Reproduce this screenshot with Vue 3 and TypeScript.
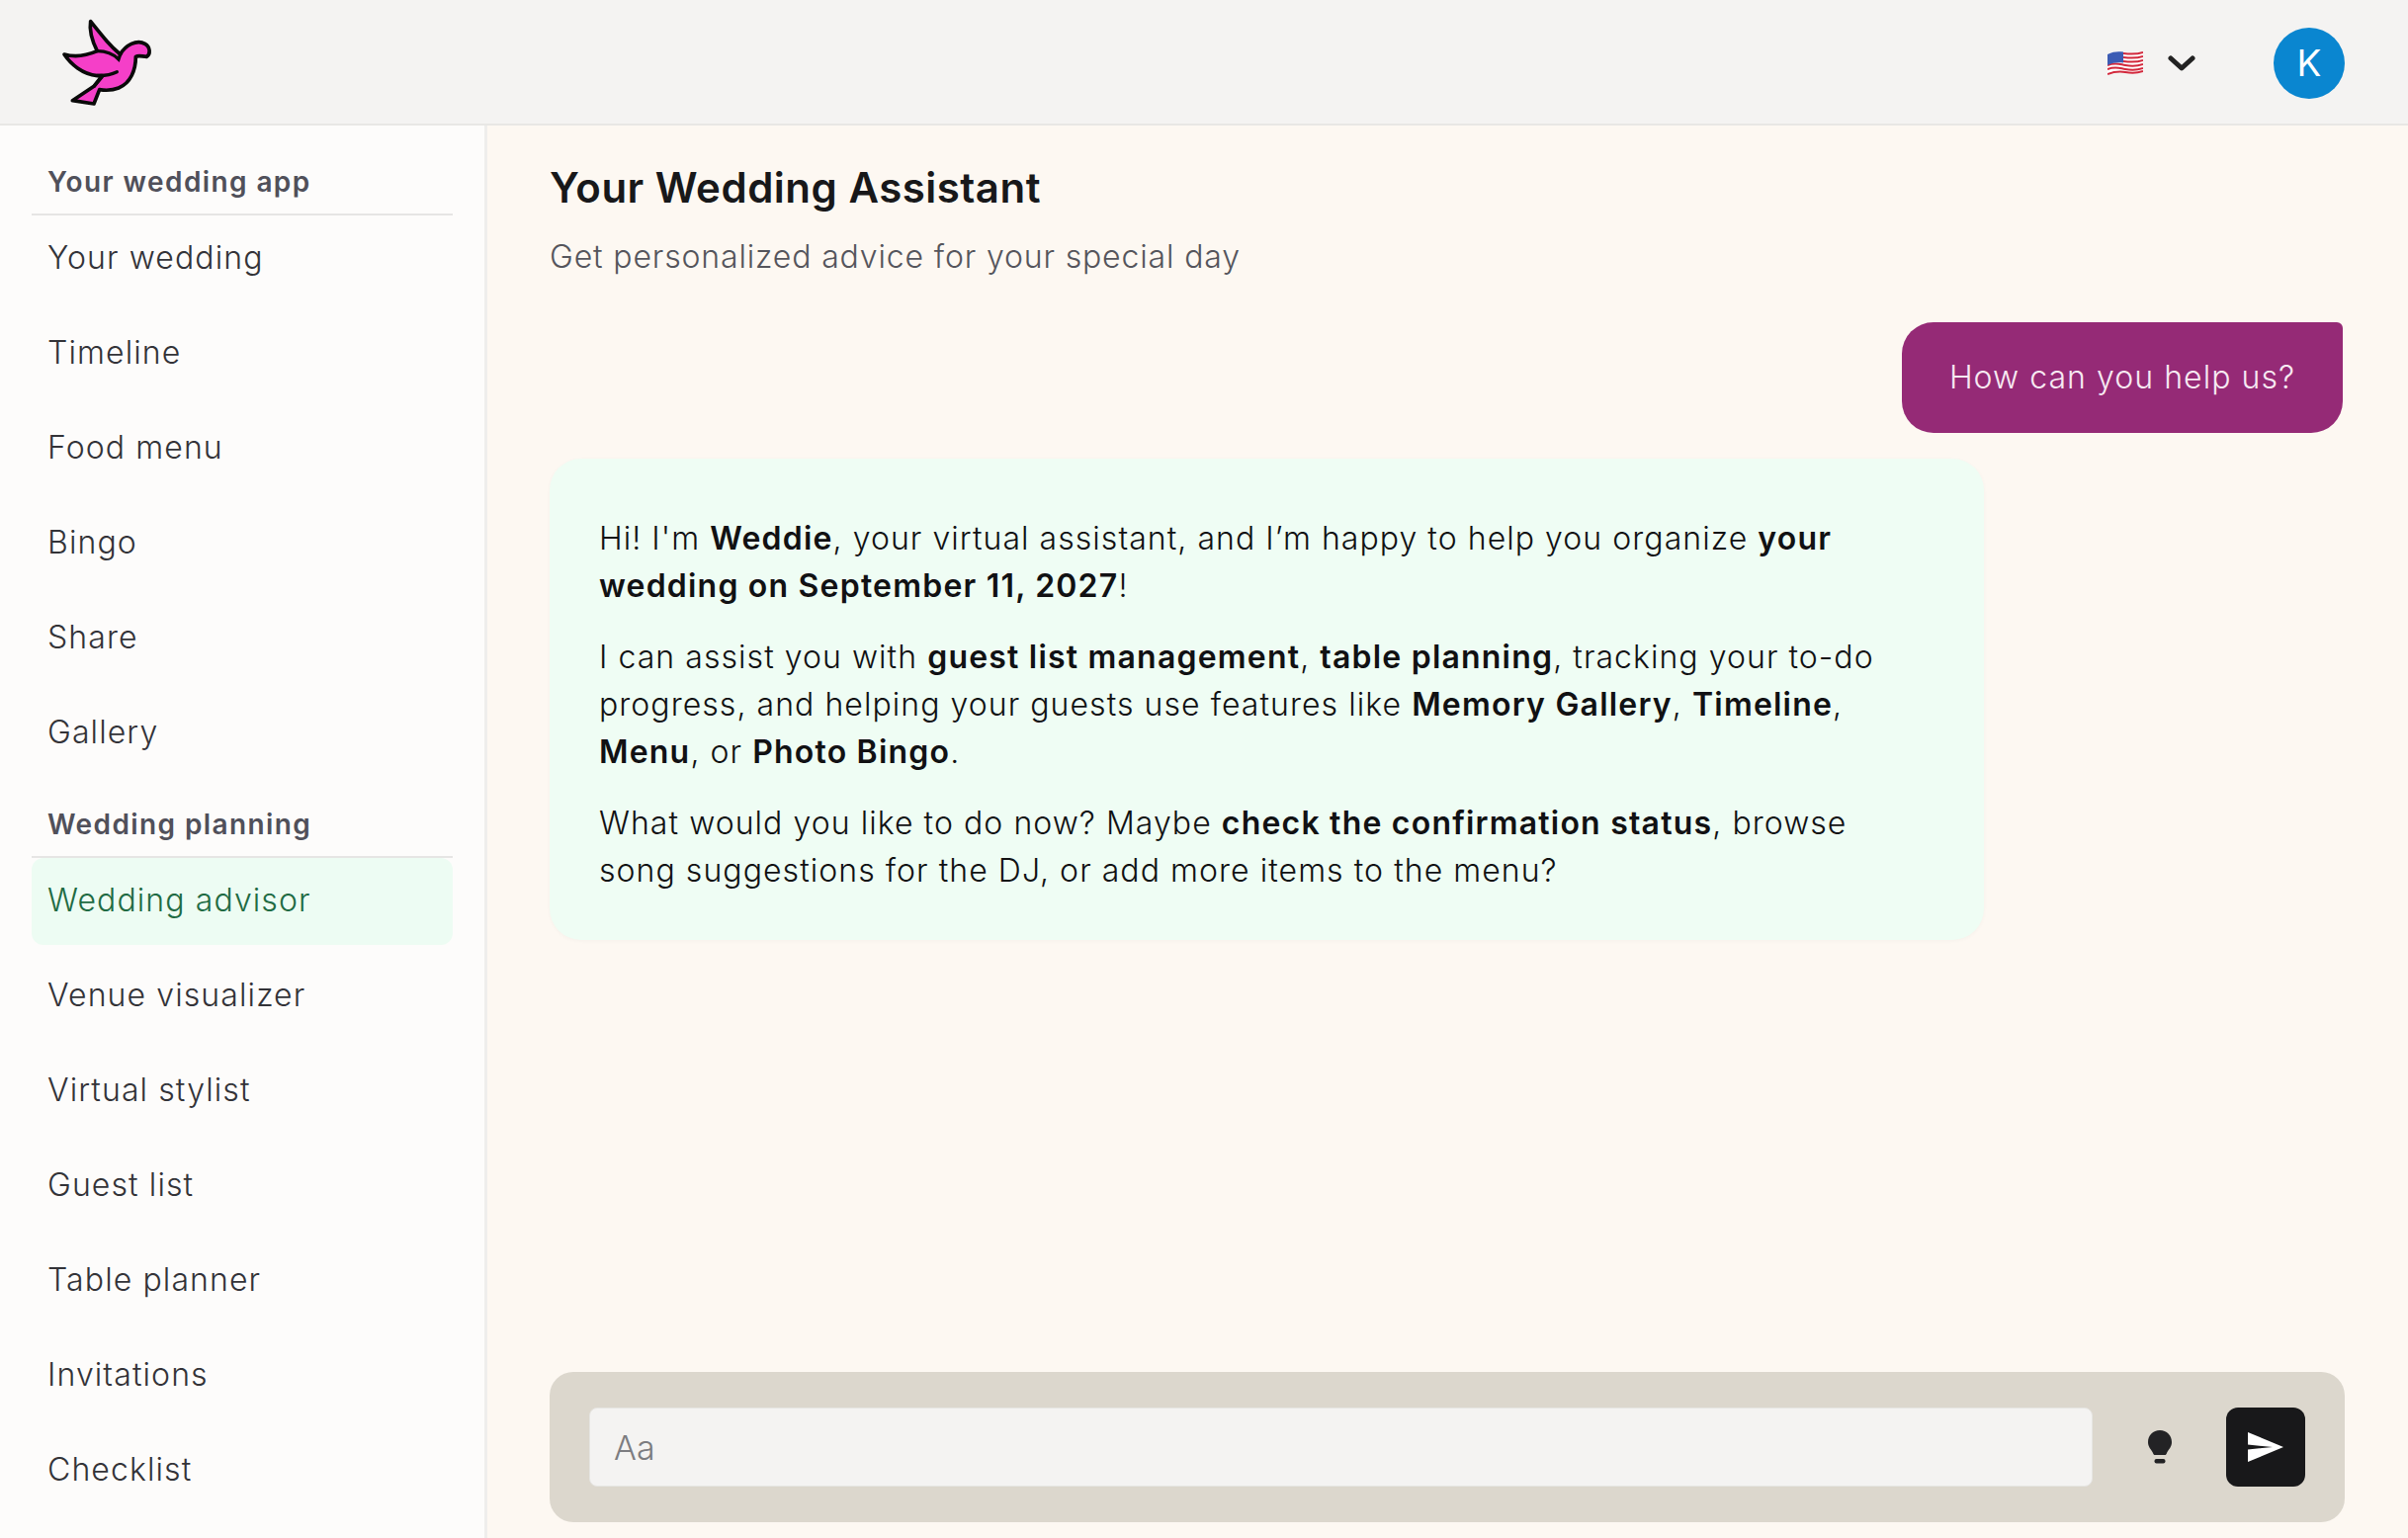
<script setup lang="ts">
interface NavGroup {
  title: string
  items: string[]
}

const groups: NavGroup[] = [
  {
    title: 'Your wedding app',
    items: ['Your wedding', 'Timeline', 'Food menu', 'Bingo', 'Share', 'Gallery'],
  },
  {
    title: 'Wedding planning',
    items: [
      'Wedding advisor',
      'Venue visualizer',
      'Virtual stylist',
      'Guest list',
      'Table planner',
      'Invitations',
      'Checklist',
    ],
  },
]

const activeItem = 'Wedding advisor'
</script>

<template>
  <div class="app">
    <header class="topbar">
      <svg class="logo" viewBox="0 0 390 330" aria-label="Logo">
        <path
          class="logo__fill"
          d="M155 35 C195 85 215 110 245 135 C260 108 295 88 320 103 C337 113 337 135 325 142 C312 142 302 137 292 142 C292 182 277 222 240 237 C220 245 195 244 182 242 L165 285 L100 275 L165 232 L190 200 L175 200 C130 195 95 165 75 135 C110 145 140 140 175 125 C160 95 150 65 155 35 Z"
        />
        <path class="logo__line" d="M175 125 C200 125 225 135 240 150 L245 135" />
        <path class="logo__line" d="M175 199 C195 200 220 195 235 188" />
        <path class="logo__line" d="M165 232 L190 203" />
      </svg>

      <div class="topbar__actions">
        <button type="button" class="lang-btn" aria-label="Language">
          <svg class="flag" viewBox="0 0 36 26">
            <path fill="#fff" d="M0 4 C8 0 12 1 18 2 C24 3 30 3 36 1 V22 C30 24 24 24 18 23 C12 22 8 22 0 25 Z" />
            <path
              fill="none"
              stroke="#d2283c"
              stroke-width="2"
              d="M16 3 C24 4 30 4 36 2 M16 7 C24 8 30 8 36 6 M16 11 C24 12 30 12 36 10 M0 15 C8 12 12 14 18 15 C24 16 30 16 36 14 M0 19 C8 16 12 18 18 19 C24 20 30 20 36 18 M0 24 C8 21 12 21 18 22 C24 23 30 23 36 21"
            />
            <path fill="#3c5cb4" d="M0 4 C6 1 11 1 16 1.6 V12.6 C11 12 6 12 0 15 Z" />
          </svg>
          <svg class="chevron" viewBox="0 0 28 18">
            <path d="M3 4 L14 14 L25 4" />
          </svg>
        </button>
        <div class="avatar">K</div>
      </div>
    </header>

    <div class="layout">
      <aside class="sidebar">
        <section v-for="group in groups" :key="group.title" class="nav-group">
          <h3 class="nav-group__title">{{ group.title }}</h3>
          <a
            v-for="item in group.items"
            :key="item"
            href="#"
            class="nav-item"
            :class="{ 'nav-item--active': item === activeItem }"
          >
            {{ item }}
          </a>
        </section>
      </aside>

      <main class="chat">
        <h1 class="chat__title">Your Wedding Assistant</h1>
        <p class="chat__subtitle">Get personalized advice for your special day</p>

        <div class="chat__messages">
          <div class="bubble bubble--user">How can you help us?</div>
          <div class="bubble bubble--bot">
            <p>
              Hi! I'm <strong>Weddie</strong>, your virtual assistant, and I’m happy to help you organize
              <strong>your wedding on September 11, 2027</strong>!
            </p>
            <p>
              I can assist you with <strong>guest list management</strong>, <strong>table planning</strong>,
              tracking your to-do progress, and helping your guests use features like
              <strong>Memory Gallery</strong>, <strong>Timeline</strong>, <strong>Menu</strong>, or
              <strong>Photo Bingo</strong>.
            </p>
            <p>
              What would you like to do now? Maybe <strong>check the confirmation status</strong>, browse
              song suggestions for the DJ, or add more items to the menu?
            </p>
          </div>
        </div>

        <form class="composer" @submit.prevent>
          <input class="composer__input" type="text" placeholder="Aa" />
          <button type="button" class="composer__hint" aria-label="Suggestions">
            <svg viewBox="0 0 24 34">
              <path
                d="M12 0 C5 0 0 5 0 12 C0 17 3 19 5 23 C5.500 24.500 6 25 7 25 H17 C18 25 18.500 24.500 19 23 C21 19 24 17 24 12 C24 5 19 0 12 0 Z"
              />
              <rect x="6.500" y="29" width="11" height="4.500" rx="2" />
            </svg>
          </button>
          <button type="submit" class="composer__send" aria-label="Send">
            <svg viewBox="0 0 36 30">
              <path d="M0 0 L36 15 L0 30 L0 17.500 L25 15 L0 12.500 Z" />
            </svg>
          </button>
        </form>
      </main>
    </div>
  </div>
</template>

<style>
html,
body {
  margin: 0;
  background: #fdf8f2;
}
</style>

<style scoped>
.app {
  height: 1556px;
  display: flex;
  flex-direction: column;
  overflow: hidden;
  font-family: Inter, 'Open Sans', sans-serif;
  color: #333338;
}

.topbar {
  flex: 0 0 127px;
  box-sizing: border-box;
  display: flex;
  align-items: center;
  justify-content: space-between;
  padding-left: 40px;
  padding-right: 64px;
  background: #f4f3f2;
  border-bottom: 2px solid #e8e7e5;
}

.logo {
  width: 130px;
  height: 110px;
  margin-top: 4px;
}

.logo__fill {
  fill: #f53fc8;
  stroke: #0a0a0a;
  stroke-width: 11;
  stroke-linejoin: round;
}

.logo__line {
  fill: none;
  stroke: #0a0a0a;
  stroke-width: 10;
  stroke-linecap: round;
}

.topbar__actions {
  display: flex;
  align-items: center;
  gap: 79px;
  margin-top: 2px;
}

.lang-btn {
  display: flex;
  align-items: center;
  gap: 25px;
  margin-left: -2px;
  padding: 0;
  border: 0;
  background: none;
}

.flag {
  width: 36px;
  height: 26px;
}

.chevron {
  width: 28px;
  height: 18px;
  fill: none;
  stroke: #222;
  stroke-width: 5;
  stroke-linecap: round;
  stroke-linejoin: round;
}

.avatar {
  width: 72px;
  height: 72px;
  display: flex;
  align-items: center;
  justify-content: center;
  border-radius: 50%;
  background: #0a86d0;
  color: #fff;
  font-size: 37px;
}

.layout {
  flex: 1;
  min-height: 0;
  display: flex;
}

.sidebar {
  flex: 0 0 493px;
  box-sizing: border-box;
  padding: 25px 32px 0;
  background: #fdfcfb;
  border-right: 3px solid #efeeec;
}

.nav-group + .nav-group {
  margin-top: 16px;
}

.nav-group__title {
  margin: 0;
  height: 66px;
  display: flex;
  align-items: center;
  padding: 0 16px;
  border-bottom: 2px solid #e6e5e4;
  box-sizing: border-box;
  font-size: 28px;
  font-weight: 600;
  letter-spacing: 1.4px;
  color: #50505a;
}

.nav-item {
  height: 88px;
  box-sizing: border-box;
  margin-bottom: 8px;
  display: flex;
  align-items: center;
  padding: 0 16px 4px;
  border-radius: 12px;
  font-size: 32px;
  font-weight: 300;
  letter-spacing: 1.1px;
  color: #333338;
  text-decoration: none;
}

.nav-item--active {
  background: #edfcf3;
  color: #1f6b43;
}

.chat {
  flex: 1;
  min-width: 0;
  box-sizing: border-box;
  display: flex;
  flex-direction: column;
  padding: 36px 64px 16px 63px;
}

.chat__title {
  margin: 0;
  font-size: 42px;
  line-height: 54px;
  font-weight: 600;
  letter-spacing: 0.5px;
  color: #18181a;
}

.chat__subtitle {
  margin: 16px 0 0;
  font-size: 32px;
  font-weight: 300;
  line-height: 54px;
  letter-spacing: 0.85px;
  color: #55555c;
}

.chat__messages {
  flex: 1;
  min-height: 0;
  display: flex;
  flex-direction: column;
  padding-top: 39px;
  gap: 26px;
}

.bubble {
  box-sizing: border-box;
  font-size: 32px;
  line-height: 48px;
}

.bubble--user {
  align-self: flex-end;
  width: 446px;
  height: 112px;
  margin-right: 2px;
  display: flex;
  align-items: center;
  justify-content: center;
  border-radius: 32px 6px 32px 32px;
  background: #952a76;
  color: #f7e9f2;
  font-weight: 300;
  letter-spacing: 1.05px;
}

.bubble--bot {
  width: 1451px;
  padding: 57px 70px 46px 50px;
  border-radius: 32px;
  background: #effdf4;
  box-shadow: 0 1px 4px rgba(0, 0, 0, 0.03);
  color: #111113;
  font-weight: 300;
  letter-spacing: 1.05px;
}

.bubble--bot p {
  margin: 0 0 24px;
}

.bubble--bot p:last-child {
  margin-bottom: 0;
}

.bubble--bot strong {
  font-weight: 600;
  letter-spacing: 1.2px;
}

.composer {
  flex: 0 0 152px;
  box-sizing: border-box;
  display: flex;
  align-items: center;
  padding: 0 40px;
  border-radius: 24px;
  background: #dcd7cd;
}

.composer__input {
  flex: 1;
  min-width: 0;
  height: 80px;
  box-sizing: border-box;
  padding: 0 24px;
  border: 1px solid #e6e5e2;
  border-radius: 8px;
  outline: 0;
  background: #f4f3f2;
  font: inherit;
  font-size: 34px;
  font-weight: 300;
}

.composer__input::placeholder {
  color: #7c7c80;
}

.composer__hint {
  width: 135px;
  display: flex;
  justify-content: center;
  padding: 0;
  border: 0;
  background: none;
}

.composer__hint svg {
  width: 24px;
  height: 34px;
  fill: #232325;
}

.composer__send {
  flex: 0 0 80px;
  height: 80px;
  display: flex;
  align-items: center;
  justify-content: center;
  padding: 0;
  border: 0;
  border-radius: 12px;
  background: #18181a;
}

.composer__send svg {
  width: 36px;
  height: 30px;
  fill: #fff;
}
</style>
